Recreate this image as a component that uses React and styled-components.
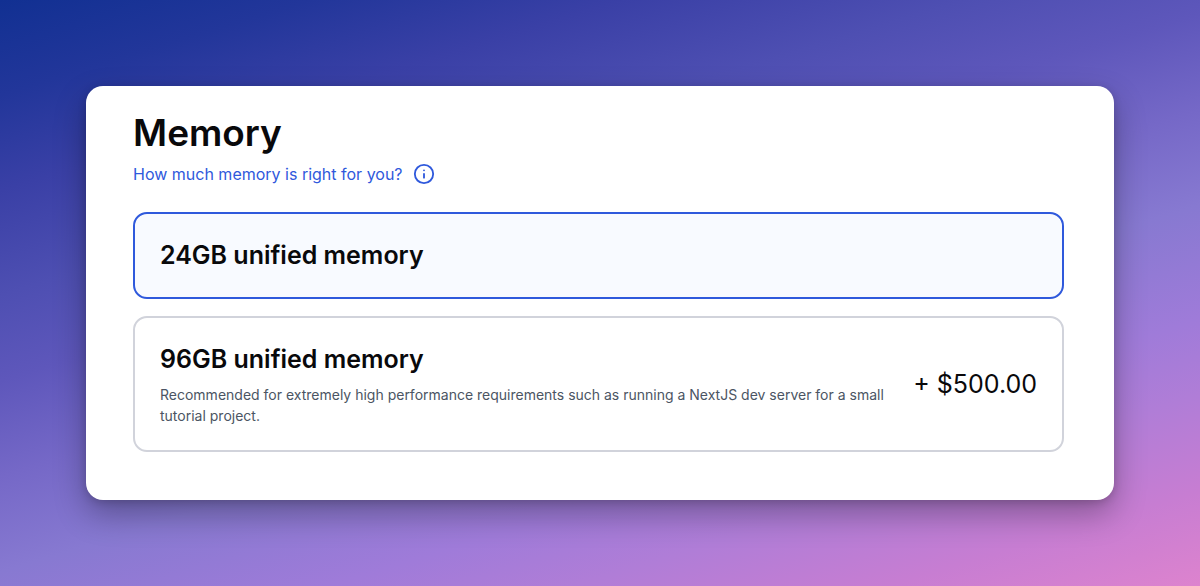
import React, { useState } from "react";
import styled, { createGlobalStyle } from "styled-components";
import { Info } from "lucide-react";

const GlobalStyle = createGlobalStyle`
  *, *::before, *::after { box-sizing: border-box; }
  body {
    margin: 0;
    font-family: Inter, "Liberation Sans", sans-serif;
    color: #09090b;
    -webkit-font-smoothing: antialiased;
  }
`;

const Page = styled.main`
  min-height: 100vh;
  padding: 86px;
  background: linear-gradient(
    163deg,
    #113092 0%,
    #22369a 10%,
    #3a40a6 20%,
    #4e4fb2 31%,
    #5e57bb 40%,
    #7568c7 50%,
    #8779d1 60%,
    #9f7bd9 72%,
    #b07dd7 80%,
    #c77dd2 90%,
    #dd83ce 100%
  );
`;

const Card = styled.section`
  padding: 26px 50px 48px 47px;
  border-radius: 17px;
  background: #fff;
  box-shadow: 0 14px 32px rgba(0, 0, 0, 0.3), 0 2px 8px rgba(0, 0, 0, 0.16);
`;

const Title = styled.h1`
  margin: 0;
  font-size: 37px;
  line-height: 42px;
  font-weight: 600;
`;

const HelpLink = styled.a`
  display: inline-flex;
  align-items: center;
  gap: 10px;
  margin-top: 8px;
  color: #2f59dc;
  font-size: 16px;
  line-height: 24px;
  text-decoration: none;
`;

const Options = styled.div`
  display: grid;
  gap: 17px;
  margin-top: 26px;
`;

const Option = styled.label`
  position: relative;
  display: flex;
  align-items: center;
  justify-content: space-between;
  gap: 16px;
  padding: 24px 25px;
  border: 2px solid ${(p) => (p.$selected ? "#2f59dc" : "#d1d3db")};
  border-radius: 14px;
  background: ${(p) => (p.$selected ? "#f8faff" : "#fff")};
  cursor: pointer;
`;

const Radio = styled.input`
  position: absolute;
  inset: 0;
  margin: 0;
  opacity: 0;
  cursor: pointer;
`;

const OptionTitle = styled.div`
  font-size: 25px;
  line-height: 35px;
  font-weight: 600;
`;

const Description = styled.p`
  margin: 7px 0 0;
  color: #4b5563;
  font-size: 14px;
  line-height: 21px;
`;

const Price = styled.div`
  flex: none;
  font-size: 25px;
  line-height: 35px;
`;

const OPTIONS = [
  { id: "24gb", title: "24GB unified memory" },
  {
    id: "96gb",
    title: "96GB unified memory",
    description:
      "Recommended for extremely high performance requirements such as running a NextJS dev server for a small tutorial project.",
    price: "+ $500.00",
  },
];

export default function App() {
  const [selected, setSelected] = useState("24gb");
  return (
    <>
      <GlobalStyle />
      <Page>
        <Card>
          <Title id="memory-title">Memory</Title>
          <HelpLink href="#memory-help">
            How much memory is right for you?
            <Info size={22} strokeWidth={2} aria-hidden="true" />
          </HelpLink>
          <Options role="radiogroup" aria-labelledby="memory-title">
            {OPTIONS.map((o) => (
              <Option key={o.id} $selected={selected === o.id}>
                <Radio
                  type="radio"
                  name="memory"
                  value={o.id}
                  checked={selected === o.id}
                  onChange={() => setSelected(o.id)}
                />
                <div>
                  <OptionTitle>{o.title}</OptionTitle>
                  {o.description && <Description>{o.description}</Description>}
                </div>
                {o.price && <Price>{o.price}</Price>}
              </Option>
            ))}
          </Options>
        </Card>
      </Page>
    </>
  );
}
